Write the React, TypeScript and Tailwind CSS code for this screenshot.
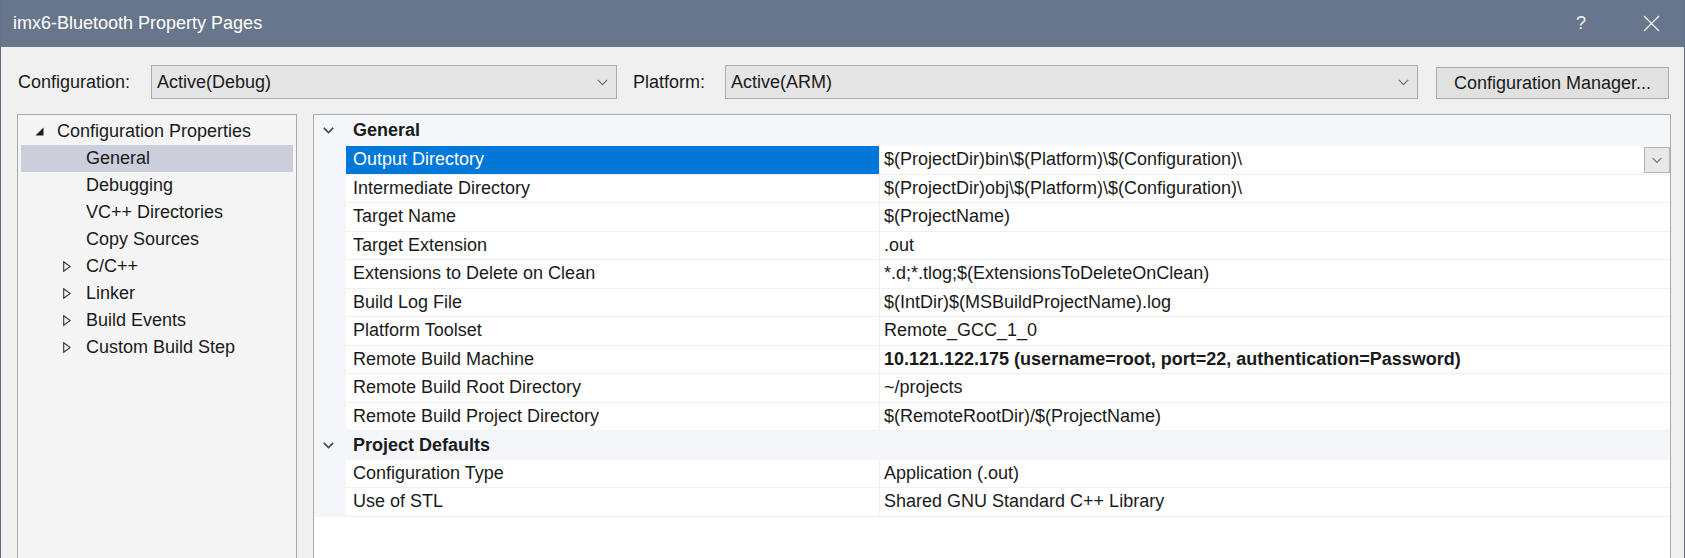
import React from 'react';

type Row = { name: string; value: string; bold?: boolean; selected?: boolean };

const general: Row[] = [
  { name: 'Output Directory', value: '$(ProjectDir)bin\\$(Platform)\\$(Configuration)\\', selected: true },
  { name: 'Intermediate Directory', value: '$(ProjectDir)obj\\$(Platform)\\$(Configuration)\\' },
  { name: 'Target Name', value: '$(ProjectName)' },
  { name: 'Target Extension', value: '.out' },
  { name: 'Extensions to Delete on Clean', value: '*.d;*.tlog;$(ExtensionsToDeleteOnClean)' },
  { name: 'Build Log File', value: '$(IntDir)$(MSBuildProjectName).log' },
  { name: 'Platform Toolset', value: 'Remote_GCC_1_0' },
  { name: 'Remote Build Machine', value: '10.121.122.175 (username=root, port=22, authentication=Password)', bold: true },
  { name: 'Remote Build Root Directory', value: '~/projects' },
  { name: 'Remote Build Project Directory', value: '$(RemoteRootDir)/$(ProjectName)' },
];

const defaults: Row[] = [
  { name: 'Configuration Type', value: 'Application (.out)' },
  { name: 'Use of STL', value: 'Shared GNU Standard C++ Library' },
];

const treeChildren = [
  { label: 'General', selected: true },
  { label: 'Debugging' },
  { label: 'VC++ Directories' },
  { label: 'Copy Sources' },
  { label: 'C/C++', collapsed: true },
  { label: 'Linker', collapsed: true },
  { label: 'Build Events', collapsed: true },
  { label: 'Custom Build Step', collapsed: true },
];

function Chevron({ color = '#606060', w = 11, sw = 1.2 }: { color?: string; w?: number; sw?: number }) {
  return (
    <svg width={w} height="7" viewBox="0 0 11 7" fill="none">
      <polyline points="0.8,0.9 5.5,5.6 10.2,0.9" stroke={color} strokeWidth={sw} />
    </svg>
  );
}

function Combo({ text, width }: { text: string; width: string }) {
  return (
    <div className={`${width} h-[34px] border border-[#adadad] bg-[#e5e5e5] flex items-center justify-between pl-[5px] pr-[8px]`}>
      <span>{text}</span>
      <Chevron color="#707070" />
    </div>
  );
}

function PropRow({ row }: { row: Row }) {
  return (
    <div className="flex h-[28.5px]">
      <div className="w-[32px] bg-[#f4f6fa]" />
      <div
        className={`w-[533px] pl-[7px] flex items-center border-b border-[#f0f0f0] ${
          row.selected ? 'bg-[#0078d7] text-white' : ''
        }`}
      >
        {row.name}
      </div>
      <div className="flex-1 flex items-center border-b border-l border-[#f0f0f0] pl-[4px]">
        <span className={row.bold ? 'font-bold' : ''}>{row.value}</span>
        {row.selected && (
          <div className="ml-auto self-start mt-[1px] w-[26px] h-[26px] bg-[#e8e8e8] border border-[#b4b4b4] flex items-center justify-center">
            <Chevron color="#707070" w={10} />
          </div>
        )}
      </div>
    </div>
  );
}

function Header({ label, tall }: { label: string; tall?: boolean }) {
  return (
    <div className={`flex items-center bg-[#f4f6fa] ${tall ? 'h-[31px]' : 'h-[28.5px]'}`}>
      <div className="w-[32px] pl-[9px] flex items-center">
        <Chevron color="#4a4a4a" sw={1.6} />
      </div>
      <span className="pl-[7px] font-bold">{label}</span>
    </div>
  );
}

export default function App() {
  return (
    <div className="w-[1685px] h-[558px] overflow-hidden flex flex-col bg-[#f0f0f0] border-x border-[#5f6e82] text-[18px] text-[#1a1a1a] font-['Liberation_Sans',Arial,sans-serif]">
      {/* title bar */}
      <div className="h-[47px] shrink-0 bg-[#67768a] flex items-center pl-[12px] pr-[24px] text-white">
        <span>imx6-Bluetooth Property Pages</span>
        <span className="ml-auto font-light text-[#eef1f5]">?</span>
        <svg className="ml-[57px]" width="17" height="17" viewBox="0 0 17 17">
          <path d="M1 1 L16 16 M16 1 L1 16" stroke="#f4f6f8" strokeWidth="1.3" />
        </svg>
      </div>

      {/* configuration bar */}
      <div className="mt-[18px] h-[34px] shrink-0 flex items-start pl-[17px]">
        <div className="w-[133px] h-[34px] flex items-center">Configuration:</div>
        <Combo text="Active(Debug)" width="w-[466px]" />
        <div className="ml-[16px] w-[92px] h-[34px] flex items-center">Platform:</div>
        <Combo text="Active(ARM)" width="w-[693px]" />
        <button className="ml-[18px] mt-[2px] w-[233px] h-[32px] border border-[#adadad] bg-[#e1e1e1] flex items-center justify-center">
          Configuration Manager...
        </button>
      </div>

      {/* panels */}
      <div className="mt-[15px] flex pl-[16px] gap-[16px]">
        <div className="w-[280px] h-[480px] shrink-0 bg-[#f5f5f5] border border-[#a9a9a9] pt-[3px] px-[3px]">
          <div className="h-[27px] flex items-center">
            <svg className="ml-[14px]" width="9" height="9" viewBox="0 0 9 9">
              <polygon points="8.5,0.5 8.5,8.5 0.5,8.5" fill="#1e1e1e" />
            </svg>
            <span className="ml-[13px]">Configuration Properties</span>
          </div>
          {treeChildren.map((c) => (
            <div key={c.label} className={`h-[27px] flex items-center ${c.selected ? 'bg-[#cccedb]' : ''}`}>
              <div className="w-[65px] pl-[42px] flex items-center">
                {c.collapsed && (
                  <svg width="8" height="11" viewBox="0 0 8 11">
                    <polygon points="0.7,0.7 7.2,5.5 0.7,10.3" fill="none" stroke="#333" strokeWidth="1.1" />
                  </svg>
                )}
              </div>
              <span>{c.label}</span>
            </div>
          ))}
        </div>

        <div className="w-[1358px] h-[480px] shrink-0 bg-white border border-[#a9a9a9] flex flex-col">
          <Header label="General" tall />
          {general.map((r) => (
            <PropRow key={r.name} row={r} />
          ))}
          <Header label="Project Defaults" />
          {defaults.map((r) => (
            <PropRow key={r.name} row={r} />
          ))}
        </div>
      </div>
    </div>
  );
}
